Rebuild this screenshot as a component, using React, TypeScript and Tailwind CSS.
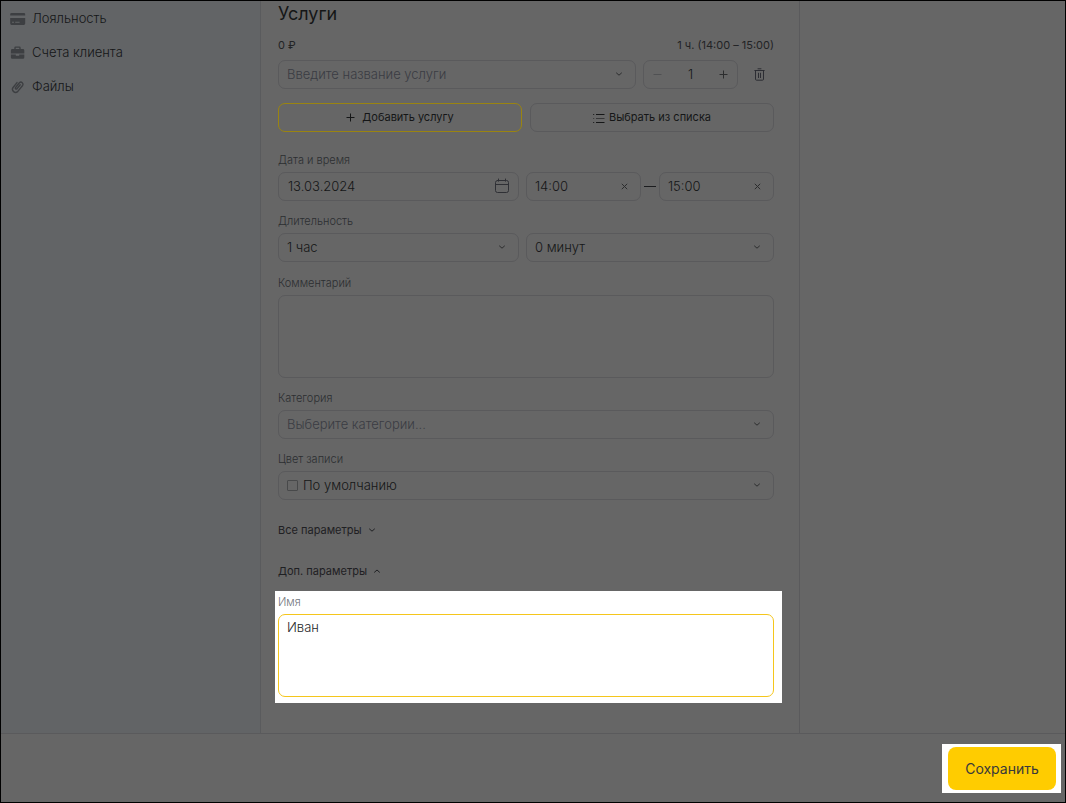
import React, { useState } from "react";

const fieldClass = "w-full h-[29px] rounded-[7px] border border-[#5a5a5c] bg-transparent pb-[2px] text-[13px] font-light leading-4 outline-none";

function Chevron({ up = false, className = "" }: { up?: boolean, className?: string }) {
    return (
        <svg width="8" height="8" viewBox="0 0 8 8" fill="none" stroke="currentColor" strokeWidth="1" strokeLinecap="round" strokeLinejoin="round" className={className}>
            <path d={up ? "M1.5 5.2 4 3l2.5 2.2" : "M1.5 3 4 5.2 6.5 3"} />
        </svg>
    )
}

function CardIcon() {
    return (
        <svg width="16" height="16" viewBox="0 0 16 16" fill="currentColor">
            <path d="M1.5 2h12.4A1.3 1.3 0 0 1 15.2 3.3V4.4H.2V3.3A1.3 1.3 0 0 1 1.5 2z" />
            <path fillRule="evenodd" d="M.2 7h15v5.6a1.4 1.4 0 0 1-1.4 1.4H1.6a1.4 1.4 0 0 1-1.4-1.4zM2 10.8v1h2v-1zM5.2 10.8v1h4.4v-1z" />
        </svg>
    )
}

function BriefcaseIcon() {
    return (
        <svg width="16" height="16" viewBox="0 0 16 16" fill="currentColor">
            <path fillRule="evenodd" d="M4.3 4V2.8a1.4 1.4 0 0 1 1.4-1.4h3.6a1.4 1.4 0 0 1 1.4 1.4V4h2.2a1.4 1.4 0 0 1 1.4 1.4v3H.9v-3A1.4 1.4 0 0 1 2.3 4zM5.7 4h3.6V2.8H5.7z" />
            <path d="M.9 9.4h4.9v1.3h3.4V9.4h5.1v3a1.3 1.3 0 0 1-1.3 1.3H2.2a1.3 1.3 0 0 1-1.3-1.3z" />
        </svg>
    )
}

function ClipIcon() {
    return (
        <svg width="16" height="16" viewBox="0 0 16 16" fill="none" stroke="currentColor" strokeWidth="1.4" strokeLinecap="round" strokeLinejoin="round">
            <path d="M10.2 5.8 6.9 9.9a1 1 0 0 1-1.5-1.2l4-4.9a2.1 2.1 0 0 1 3.2 2.7l-5 6.1a3.1 3.1 0 0 1-4.7-3.9L7 3.6" />
        </svg>
    )
}

function CalendarIcon() {
    return (
        <svg width="16" height="16" viewBox="0 0 16 16" fill="none" stroke="currentColor" strokeWidth="1" strokeLinecap="round">
            <rect x="1.5" y="2.5" width="13" height="12" rx="2" />
            <path d="M1.5 6.5h13M4.5 1v2.2M11.5 1v2.2" />
        </svg>
    )
}

function TrashIcon() {
    return (
        <svg width="11" height="14" viewBox="0 0 11 14" fill="none" stroke="currentColor" strokeWidth="1" strokeLinecap="round" strokeLinejoin="round">
            <path d="M.8 2.5h9.4M4 .8h3M1.5 2.5v8.7a1 1 0 0 0 1 1h6a1 1 0 0 0 1-1V2.5M4.5 5.2v4.4M6.5 5.2v4.4" />
        </svg>
    )
}

function ListIcon() {
    return (
        <svg width="12" height="12" viewBox="0 0 12 12" fill="none" stroke="currentColor" strokeWidth="1">
            <path d="M3 2.5h8.5M3 10.5h8.5M.2 2.5h1M.2 10.5h1" />
            <path d="M3 6.5h8.5M.2 6.5h1" opacity=".6" />
        </svg>
    )
}

function PlusIcon() {
    return (
        <svg width="9" height="9" viewBox="0 0 9 9" fill="none" stroke="currentColor" strokeWidth="1">
            <path d="M.5 4.5h8M4.5.5v8" />
        </svg>
    )
}

function SelectField({ id, options, muted = false, swatch = false, label }: { id: string, options: string[], muted?: boolean, swatch?: boolean, label?: string }) {
    return (
        <div className="relative min-w-0 flex-1">
            <select id={id} aria-label={label} className={`${fieldClass} appearance-none pr-7 ${swatch ? "pl-6" : "pl-2"} ${muted ? "text-[#3a3c43]" : "text-[#151617]"}`}>
                {options.map(option => <option key={option}>{option}</option>)}
            </select>
            {swatch && <span className="pointer-events-none absolute left-[9px] top-[9px] h-[11px] w-[11px] rounded-[1px] border border-[#48494a]" />}
            <Chevron className="pointer-events-none absolute right-[13px] top-[10px] text-[#2c2d2e]" />
        </div>
    )
}

function TimeField({ label, initial }: { label: string, initial: string }) {
    const [value, setValue] = useState(initial)

    return (
        <div className="relative min-w-0 flex-1">
            <input aria-label={label} value={value} onChange={e => setValue(e.target.value)} className={`${fieldClass} pl-2 pr-7`} />
            <button aria-label="Очистить" onClick={() => setValue("")} className="absolute right-[13px] top-[11px] text-[#2c2d2e]">
                <svg width="7" height="7" viewBox="0 0 7 7" stroke="currentColor" strokeWidth="1">
                    <path d="M.8.8l5.4 5.4M6.2.8.8 6.2" />
                </svg>
            </button>
        </div>
    )
}

function Field({ label, id, children }: { label: string, id: string, children: React.ReactNode }) {
    return (
        <div className="flex flex-col gap-1">
            <label htmlFor={id} className="text-[11px] font-light leading-4 text-[#2c2e31]">{label}</label>
            {children}
        </div>
    )
}

export default function App() {
    const [count, setCount] = useState(1)

    const menuItems = [
        { name: "Лояльность", url: "#loyalty", icon: <CardIcon /> },
        { name: "Счета клиента", url: "#accounts", icon: <BriefcaseIcon /> },
        { name: "Файлы", url: "#files", icon: <ClipIcon /> }
    ]

    return (
        <div className="flex min-h-screen flex-col border border-black bg-[#666666] font-['Inter',sans-serif] text-[#151617]">
            <div className="grid flex-1 grid-cols-[260px_minmax(0,539px)_minmax(0,1fr)]">
                <nav className="border-r border-[#5a5b5d] bg-[#626466] pt-px">
                    <ul>
                        {menuItems.map(item => (
                            <li key={item.name}>
                                <a href={item.url} className="flex h-[34px] items-center gap-[6px] pl-[9px] text-[13px] font-light">
                                    <span className="text-[#3d3f42]">{item.icon}</span>
                                    {item.name}
                                </a>
                            </li>
                        ))}
                    </ul>
                </nav>

                <main className="border-r border-[#5a5a5c] pb-[30px] pl-[17px] pr-[25px]">
                    <h2 className="text-lg leading-[26px]">Услуги</h2>
                    <div className="mt-[10px] flex justify-between text-[11px] leading-4 text-[#222325]">
                        <span>0 ₽</span>
                        <span>1 ч. (14:00 – 15:00)</span>
                    </div>
                    <div className="mt-[7px] flex gap-[7px]">
                        <SelectField id="service" label="Услуга" options={["Введите название услуги"]} muted />
                        <div className="flex h-[29px] w-[95px] items-center rounded-[7px] border border-[#5a5a5c]">
                            <button aria-label="Меньше" onClick={() => setCount(Math.max(1, count - 1))} className="flex w-[27px] justify-center text-[#505153]">
                                <svg width="9" height="9" viewBox="0 0 9 9" stroke="currentColor"><path d="M.5 4.5h8" /></svg>
                            </button>
                            <input aria-label="Количество" value={count} readOnly className="min-w-0 flex-1 bg-transparent text-center text-[13px] font-light outline-none" />
                            <button aria-label="Больше" onClick={() => setCount(count + 1)} className="flex w-[27px] justify-center text-[#2c2d2e]"><PlusIcon /></button>
                        </div>
                        <button aria-label="Удалить" className="flex w-[29px] items-center justify-center text-[#2c2d33]"><TrashIcon /></button>
                    </div>
                    <div className="mt-[14px] grid grid-cols-2 gap-2 text-[11px]">
                        <button className="flex h-[29px] items-center justify-center gap-[7px] rounded-[7px] border border-[#9a8410]"><PlusIcon />Добавить услугу</button>
                        <button className="flex h-[29px] items-center justify-center gap-1 rounded-[7px] border border-[#5a5a5c]"><ListIcon />Выбрать из списка</button>
                    </div>

                    <div className="mt-5 flex flex-col gap-3">
                        <Field label="Дата и время" id="date">
                            <div className="grid grid-cols-[241fr_248fr] gap-[7px]">
                                <div className="relative">
                                    <input id="date" defaultValue="13.03.2024" className={`${fieldClass} pl-[9px] pr-8`} />
                                    <button aria-label="Календарь" className="absolute right-[9px] top-[6px] text-[#2f3035]"><CalendarIcon /></button>
                                </div>
                                <div className="flex items-center">
                                    <TimeField label="Начало" initial="14:00" />
                                    <span className="mx-[3px] h-px w-3 bg-[#1c1d1f]" />
                                    <TimeField label="Окончание" initial="15:00" />
                                </div>
                            </div>
                        </Field>
                        <Field label="Длительность" id="hours">
                            <div className="grid grid-cols-[241fr_248fr] gap-[7px]">
                                <SelectField id="hours" options={["1 час", "2 часа", "3 часа"]} />
                                <SelectField id="minutes" label="Минуты" options={["0 минут", "15 минут", "30 минут"]} />
                            </div>
                        </Field>
                    </div>

                    <div className="mt-[13px] flex flex-col gap-3">
                        <Field label="Комментарий" id="comment">
                            <textarea id="comment" className="h-[83px] resize-none rounded-[7px] border border-[#5a5a5c] px-2 py-1 text-[13px] font-light outline-none" />
                        </Field>
                        <Field label="Категория" id="category">
                            <SelectField id="category" options={["Выберите категории..."]} muted />
                        </Field>
                        <Field label="Цвет записи" id="color">
                            <SelectField id="color" options={["По умолчанию"]} swatch />
                        </Field>
                    </div>

                    <div className="mt-[22px] flex flex-col items-start gap-[25px] text-[11px] leading-4 text-[#1f2023]">
                        <button className="flex items-center gap-[6px]">Все параметры<Chevron /></button>
                        <button className="flex items-center gap-[6px]">Доп. параметры<Chevron up /></button>
                    </div>

                    {/* spotlight around the active field */}
                    <div className="-ml-[3px] -mr-2 mt-3 flex flex-col gap-1 bg-white pb-[6px] pl-[3px] pr-2 pt-[3px]">
                        <label htmlFor="name" className="text-[11px] font-light leading-4 text-[#6f7278]">Имя</label>
                        <textarea id="name" defaultValue="Иван" className="h-[83px] resize-none rounded-[7px] border border-[#f5c61c] px-2 py-[3px] text-[13px] font-light leading-[18px] text-[#252628] outline-none" />
                    </div>
                </main>
            </div>

            <footer className="flex justify-end border-t border-[#5a5a5c] pb-[9px] pr-1 pt-[10px]">
                <div className="bg-white py-[3px] pl-[6px] pr-[5px]">
                    <button className="h-[43px] w-[108px] rounded-lg bg-[#ffcc00] text-sm text-[#38393b]">Сохранить</button>
                </div>
            </footer>
        </div>
    )
}
